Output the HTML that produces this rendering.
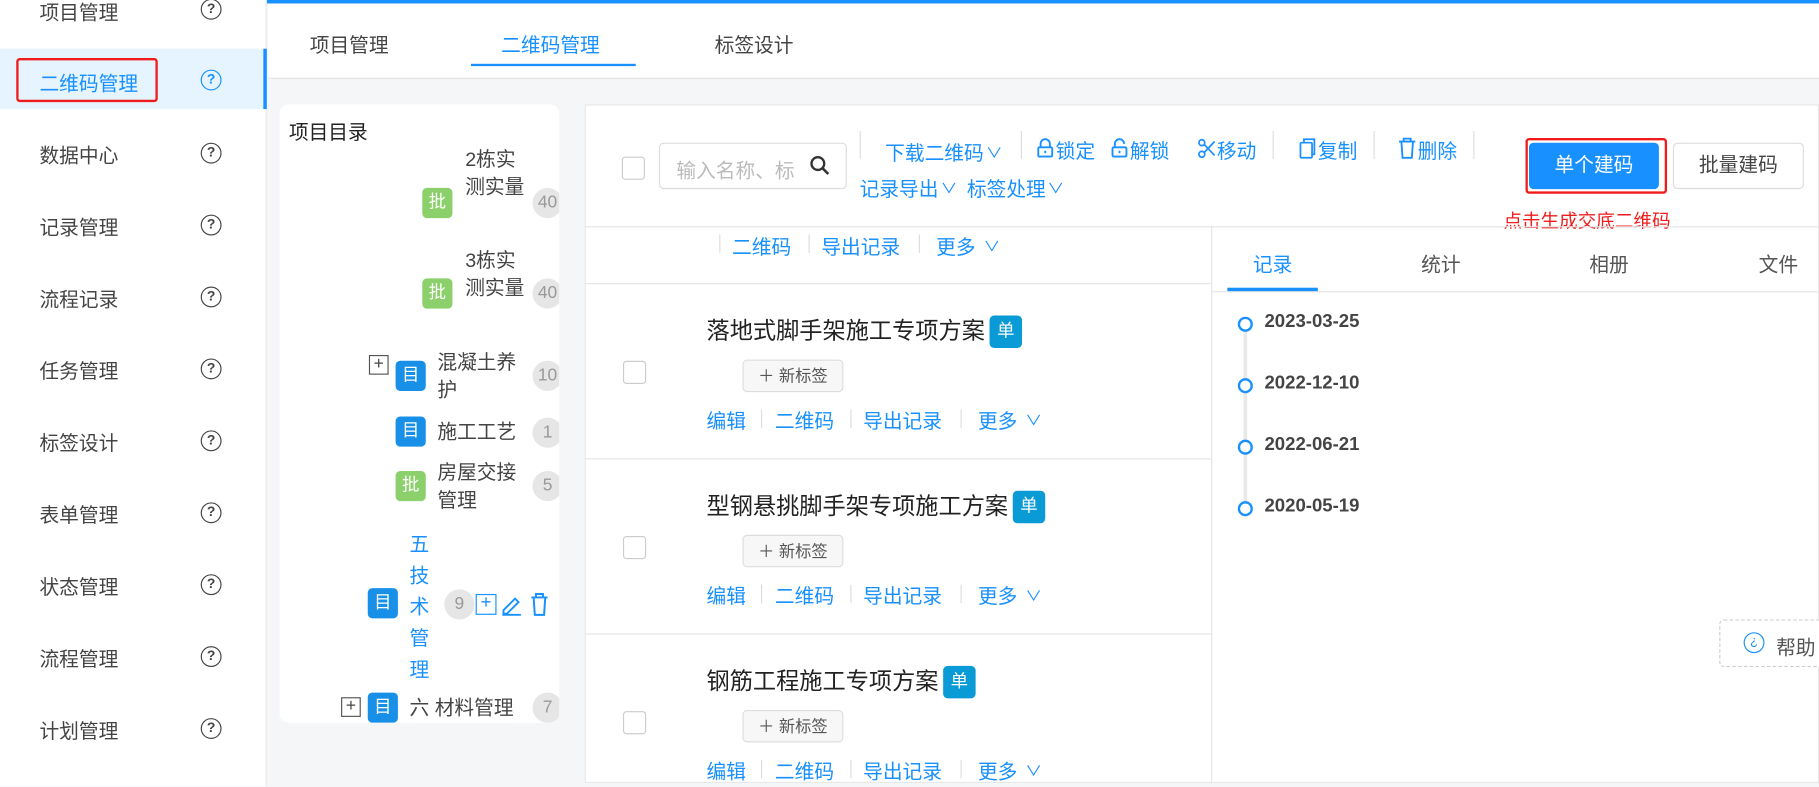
<!DOCTYPE html>
<html><head><meta charset="utf-8"><style>
*{margin:0;padding:0;box-sizing:border-box}
html,body{width:1819px;height:786px;overflow:hidden;background:#f5f6f8}
body{font-family:"Liberation Sans","Noto Sans CJK SC",sans-serif;color:#333}
#w{position:absolute;left:0;top:0;width:1568px;height:678px;transform:scale(1.16008);transform-origin:0 0;background:#f5f6f8}
.a{position:absolute;white-space:nowrap}
.side{position:absolute;left:0;top:0;width:230px;height:678px;background:#fff;border-right:1px solid #e8e8e8}
.si{position:absolute;left:34px;font-size:17px;color:#444}
.q{position:absolute;left:173px;width:18px;height:18px;border:1.6px solid #444;border-radius:50%;font-size:12px;line-height:15px;text-align:center;font-weight:bold;color:#444}
.blue{color:#1890ff}
.lk{font-size:17px;color:#1890ff}
.cv{display:inline-block;font-size:12px;transform:scaleX(1.2);margin-left:3px;vertical-align:2px}
.sep{position:absolute;width:1px;background:#ddd}
.cb{position:absolute;width:20px;height:20px;border:1px solid #ccc;border-radius:3px;background:#fff}
.tg{position:absolute;width:26px;height:26px;border-radius:4px;color:#fff;font-size:15px;line-height:26px;text-align:center}
.bd{position:absolute;width:26px;height:26px;border-radius:50%;background:#e6e6e6;color:#999;font-size:15px;line-height:26px;text-align:center;overflow:hidden}
.tt{font-size:17px;color:#444;line-height:24px}
.dot{position:absolute;left:1067px;width:13px;height:13px;border:2.5px solid #1890ff;border-radius:50%;background:#fff}
.dt{position:absolute;left:1090px;font-size:16px;font-weight:bold;color:#444}
.nb{position:absolute;left:640px;width:87px;height:28px;border:1px solid #ddd;border-radius:4px;background:#f7f7f7;font-size:14px;color:#555;line-height:26px;text-align:center}
.ttl{position:absolute;left:609px;font-size:20px;color:#222}
.dan{display:inline-block;width:28px;height:28px;background:#0a9bd6;color:#fff;border-radius:4px;font-size:15px;line-height:28px;text-align:center;vertical-align:2px;margin-left:4px}
.hl{position:absolute;left:504px;width:540px;height:1px;background:#e5e5e5}
.ic{position:absolute}
</style></head><body><div id="w">
<div class="a" style="left:0;top:0;width:1568px;height:3px;background:#1890ff"></div>
<div class="side">
<div class="si" style="top:-3px">项目管理</div><div class="q" style="top:-1px">?</div>
<div class="a" style="left:0;top:42px;width:229px;height:52px;background:#e6f4ff"></div>
<div class="a" style="left:227px;top:42px;width:3px;height:52px;background:#1890ff"></div>
<div class="a" style="left:14px;top:50px;width:122px;height:38px;border:2px solid #f01c1c;border-radius:3px"></div>
<div class="si blue" style="top:58px">二维码管理</div><div class="q" style="top:60px;border-color:#1890ff;color:#1890ff">?</div>
<div class="si" style="top:120px">数据中心</div><div class="q" style="top:123px">?</div>
<div class="si" style="top:182px">记录管理</div><div class="q" style="top:185px">?</div>
<div class="si" style="top:244px">流程记录</div><div class="q" style="top:247px">?</div>
<div class="si" style="top:306px">任务管理</div><div class="q" style="top:309px">?</div>
<div class="si" style="top:368px">标签设计</div><div class="q" style="top:371px">?</div>
<div class="si" style="top:430px">表单管理</div><div class="q" style="top:433px">?</div>
<div class="si" style="top:492px">状态管理</div><div class="q" style="top:495px">?</div>
<div class="si" style="top:554px">流程管理</div><div class="q" style="top:557px">?</div>
<div class="si" style="top:616px">计划管理</div><div class="q" style="top:619px">?</div>
</div>
<div class="a" style="left:231px;top:3px;width:1337px;height:65px;background:#fff;border-bottom:1px solid #e3e3e3"></div>
<div class="a" style="left:267px;top:25px;font-size:17px;color:#444">项目管理</div>
<div class="a blue" style="left:432px;top:25px;font-size:17px">二维码管理</div>
<div class="a" style="left:406px;top:55px;width:142px;height:2px;background:#1890ff"></div>
<div class="a" style="left:616px;top:25px;font-size:17px;color:#444">标签设计</div>

<div class="a" style="left:241px;top:90px;width:241px;height:533px;background:#fff;border-radius:8px;overflow:hidden">
<div class="a" style="left:8px;top:10px;font-size:17px;color:#222">项目目录</div>
<div class="a tt" style="left:160px;top:36px">2栋实<br>测实量</div><div class="tg" style="left:123px;top:72px;background:#8bd06a">批</div><div class="bd" style="left:218px;top:72px">40</div>
<div class="a tt" style="left:160px;top:123px">3栋实<br>测实量</div><div class="tg" style="left:123px;top:150px;background:#8bd06a">批</div><div class="bd" style="left:218px;top:150px">40</div>
<div class="a" style="left:77px;top:216px;width:17px;height:17px;border:1.5px solid #555;font-size:15px;line-height:13px;text-align:center;color:#444">+</div>
<div class="tg" style="left:100px;top:221px;background:#1890e8">目</div>
<div class="a tt" style="left:136px;top:211px">混凝土养<br>护</div><div class="bd" style="left:218px;top:221px">10</div>
<div class="tg" style="left:100px;top:269px;background:#1890e8">目</div><div class="a tt" style="left:136px;top:271px">施工工艺</div><div class="bd" style="left:218px;top:270px">1</div>
<div class="tg" style="left:100px;top:316px;background:#8bd06a">批</div><div class="a tt" style="left:136px;top:306px">房屋交接<br>管理</div><div class="bd" style="left:218px;top:316px">5</div>
<div class="tg" style="left:76px;top:417px;background:#1890e8">目</div>
<div class="a" style="left:112px;top:366px;font-size:17px;line-height:27px;color:#1890ff;width:20px;white-space:normal">五技术管理</div>
<div class="bd" style="left:142px;top:418px">9</div>
<div class="a" style="left:169px;top:422px;width:18px;height:18px;border:1.6px solid #1890ff;color:#1890ff;font-size:16px;line-height:14px;text-align:center">+</div>
<svg class="a" style="left:190px;top:421px" width="20" height="20" viewBox="0 0 20 20"><path d="M3 15 L13 5 L16 8 L6 18 L3 18Z M2 19 H18" fill="none" stroke="#1890ff" stroke-width="1.6"/></svg>
<svg class="a" style="left:214px;top:420px" width="20" height="22" viewBox="0 0 20 22"><path d="M3 5 H17 M7 5 V2 H13 V5 M5 5 L6 20 H14 L15 5" fill="none" stroke="#1890ff" stroke-width="1.7"/></svg>
<div class="a" style="left:53px;top:511px;width:17px;height:17px;border:1.5px solid #555;font-size:15px;line-height:13px;text-align:center;color:#444">+</div>
<div class="tg" style="left:76px;top:507px;background:#1890e8">目</div>
<div class="a tt" style="left:112px;top:509px;background:#fff">六 材料管理</div><div class="bd" style="left:218px;top:507px">7</div>
</div>

<div class="a" style="left:504px;top:90px;width:1064px;height:585px;background:#fff;border:1px solid #e8e8e8"></div>
<div class="cb" style="left:536px;top:135px"></div>
<div class="a" style="left:568px;top:123px;width:162px;height:40px;border:1px solid #ddd;border-radius:4px;background:#fff"></div>
<div class="a" style="left:583px;top:133px;font-size:17px;color:#bbb">输入名称、标</div>
<svg class="a" style="left:697px;top:133px" width="20" height="20" viewBox="0 0 20 20"><circle cx="8" cy="8" r="5.5" fill="none" stroke="#333" stroke-width="2"/><path d="M12 12 L17 17" stroke="#333" stroke-width="2.2"/></svg>
<div class="sep" style="left:741px;top:113px;height:24px"></div>
<div class="sep" style="left:880px;top:113px;height:24px"></div>
<div class="sep" style="left:1097px;top:113px;height:24px"></div>
<div class="sep" style="left:1184px;top:113px;height:24px"></div>
<div class="sep" style="left:1270px;top:113px;height:24px"></div>
<div class="a lk" style="left:763px;top:118px">下载二维码<span class="cv">∨</span></div>
<svg class="ic" style="left:893px;top:119px" width="16" height="18" viewBox="0 0 16 18"><path d="M4 8 V5 a4 4 0 0 1 8 0 V8" fill="none" stroke="#1890ff" stroke-width="1.6"/><rect x="2" y="8" width="12" height="8" rx="1" fill="none" stroke="#1890ff" stroke-width="1.6"/><path d="M8 11 V13" stroke="#1890ff" stroke-width="1.6"/></svg>
<div class="a lk" style="left:910px;top:116px">锁定</div>
<svg class="ic" style="left:957px;top:119px" width="16" height="18" viewBox="0 0 16 18"><path d="M4 8 V5 a4 4 0 0 1 8 0" fill="none" stroke="#1890ff" stroke-width="1.6"/><rect x="2" y="8" width="12" height="8" rx="1" fill="none" stroke="#1890ff" stroke-width="1.6"/><path d="M8 11 V13" stroke="#1890ff" stroke-width="1.6"/></svg>
<div class="a lk" style="left:974px;top:116px">解锁</div>
<svg class="ic" style="left:1032px;top:119px" width="16" height="18" viewBox="0 0 16 18"><circle cx="4" cy="4" r="2.5" fill="none" stroke="#1890ff" stroke-width="1.5"/><circle cx="4" cy="14" r="2.5" fill="none" stroke="#1890ff" stroke-width="1.5"/><path d="M6 5.5 L15 15 M6 12.5 L15 3" stroke="#1890ff" stroke-width="1.5"/></svg>
<div class="a lk" style="left:1049px;top:116px">移动</div>
<svg class="ic" style="left:1119px;top:118px" width="16" height="20" viewBox="0 0 16 20"><rect x="2" y="5" width="10" height="13" rx="1" fill="none" stroke="#1890ff" stroke-width="1.5"/><path d="M5 5 V2 H14 V15 H12" fill="none" stroke="#1890ff" stroke-width="1.5"/></svg>
<div class="a lk" style="left:1136px;top:116px">复制</div>
<svg class="ic" style="left:1205px;top:118px" width="16" height="20" viewBox="0 0 16 20"><path d="M1 4 H15 M5 4 V1.5 H11 V4 M3 4 L4 18 H12 L13 4" fill="none" stroke="#1890ff" stroke-width="1.6"/></svg>
<div class="a lk" style="left:1222px;top:116px">删除</div>
<div class="a lk" style="left:741px;top:149px">记录导出<span class="cv">∨</span>&nbsp;&nbsp;标签处理<span class="cv">∨</span></div>
<div class="a" style="left:1315px;top:119px;width:122px;height:48px;border:2px solid #f01c1c;border-radius:3px"></div>
<div class="a" style="left:1318px;top:123px;width:112px;height:40px;background:#1890ff;border-radius:4px;color:#fff;font-size:17px;line-height:40px;text-align:center">单个建码</div>
<div class="a" style="left:1442px;top:123px;width:113px;height:40px;border:1px solid #ddd;border-radius:4px;background:#fff;color:#444;font-size:17px;line-height:38px;text-align:center">批量建码</div>
<div class="a" style="left:1296px;top:177px;font-size:16px;color:#f01c1c">点击生成交底二维码</div>
<div class="a" style="left:504px;top:195px;width:1064px;height:1px;background:#e5e5e5"></div>
<div class="a" style="left:1044px;top:196px;width:1px;height:479px;background:#e5e5e5"></div>

<div class="sep" style="left:620px;top:202px;height:16px"></div>
<div class="a lk" style="left:631px;top:199px">二维码</div><div class="sep" style="left:697px;top:202px;height:16px"></div>
<div class="a lk" style="left:708px;top:199px">导出记录</div><div class="sep" style="left:792px;top:202px;height:16px"></div>
<div class="a lk" style="left:807px;top:199px">更多 <span class="cv">∨</span></div>
<div class="hl" style="top:244px"></div><div class="hl" style="top:395px"></div><div class="hl" style="top:546px"></div>

<div class="ttl" style="top:269px">落地式脚手架施工专项方案<span class="dan">单</span></div>
<div class="cb" style="left:537px;top:311px"></div><div class="nb" style="top:310px">＋ 新标签</div>
<div class="a lk" style="left:609px;top:349px">编辑</div><div class="sep" style="left:656px;top:353px;height:16px"></div>
<div class="a lk" style="left:668px;top:349px">二维码</div><div class="sep" style="left:733px;top:353px;height:16px"></div>
<div class="a lk" style="left:744px;top:349px">导出记录</div><div class="sep" style="left:828px;top:353px;height:16px"></div>
<div class="a lk" style="left:843px;top:349px">更多 <span class="cv">∨</span></div>

<div class="ttl" style="top:420px">型钢悬挑脚手架专项施工方案<span class="dan">单</span></div>
<div class="cb" style="left:537px;top:462px"></div><div class="nb" style="top:461px">＋ 新标签</div>
<div class="a lk" style="left:609px;top:500px">编辑</div><div class="sep" style="left:656px;top:504px;height:16px"></div>
<div class="a lk" style="left:668px;top:500px">二维码</div><div class="sep" style="left:733px;top:504px;height:16px"></div>
<div class="a lk" style="left:744px;top:500px">导出记录</div><div class="sep" style="left:828px;top:504px;height:16px"></div>
<div class="a lk" style="left:843px;top:500px">更多 <span class="cv">∨</span></div>

<div class="ttl" style="top:571px">钢筋工程施工专项方案<span class="dan">单</span></div>
<div class="cb" style="left:537px;top:613px"></div><div class="nb" style="top:612px">＋ 新标签</div>
<div class="a lk" style="left:609px;top:651px">编辑</div><div class="sep" style="left:656px;top:655px;height:16px"></div>
<div class="a lk" style="left:668px;top:651px">二维码</div><div class="sep" style="left:733px;top:655px;height:16px"></div>
<div class="a lk" style="left:744px;top:651px">导出记录</div><div class="sep" style="left:828px;top:655px;height:16px"></div>
<div class="a lk" style="left:843px;top:651px">更多 <span class="cv">∨</span></div>

<div class="a blue" style="left:1080px;top:214px;font-size:17px">记录</div>
<div class="a" style="left:1225px;top:214px;font-size:17px;color:#555">统计</div>
<div class="a" style="left:1370px;top:214px;font-size:17px;color:#555">相册</div>
<div class="a" style="left:1516px;top:214px;font-size:17px;color:#555">文件</div>
<div class="a" style="left:1045px;top:251px;width:523px;height:1px;background:#e5e5e5"></div>
<div class="a" style="left:1058px;top:248px;width:78px;height:3px;background:#1890ff"></div>
<div class="a" style="left:1072px;top:285px;width:3px;height:155px;background:#e8e8e8"></div>
<div class="dot" style="top:273px"></div><div class="dt" style="top:269px">2023-03-25</div>
<div class="dot" style="top:326px"></div><div class="dt" style="top:322px">2022-12-10</div>
<div class="dot" style="top:379px"></div><div class="dt" style="top:375px">2022-06-21</div>
<div class="dot" style="top:432px"></div><div class="dt" style="top:428px">2020-05-19</div>
<div class="a" style="left:1482px;top:534px;width:100px;height:41px;border:1px dashed #ccc;border-radius:4px;background:#fff"></div>
<div class="a" style="left:1503px;top:545px;width:18px;height:18px;border:1.6px solid #1890ff;border-radius:50%;color:#1890ff;font-size:11px;line-height:15px;text-align:center">¿</div>
<div class="a" style="left:1531px;top:544px;font-size:17px;color:#555">帮助</div>
</div></body></html>
